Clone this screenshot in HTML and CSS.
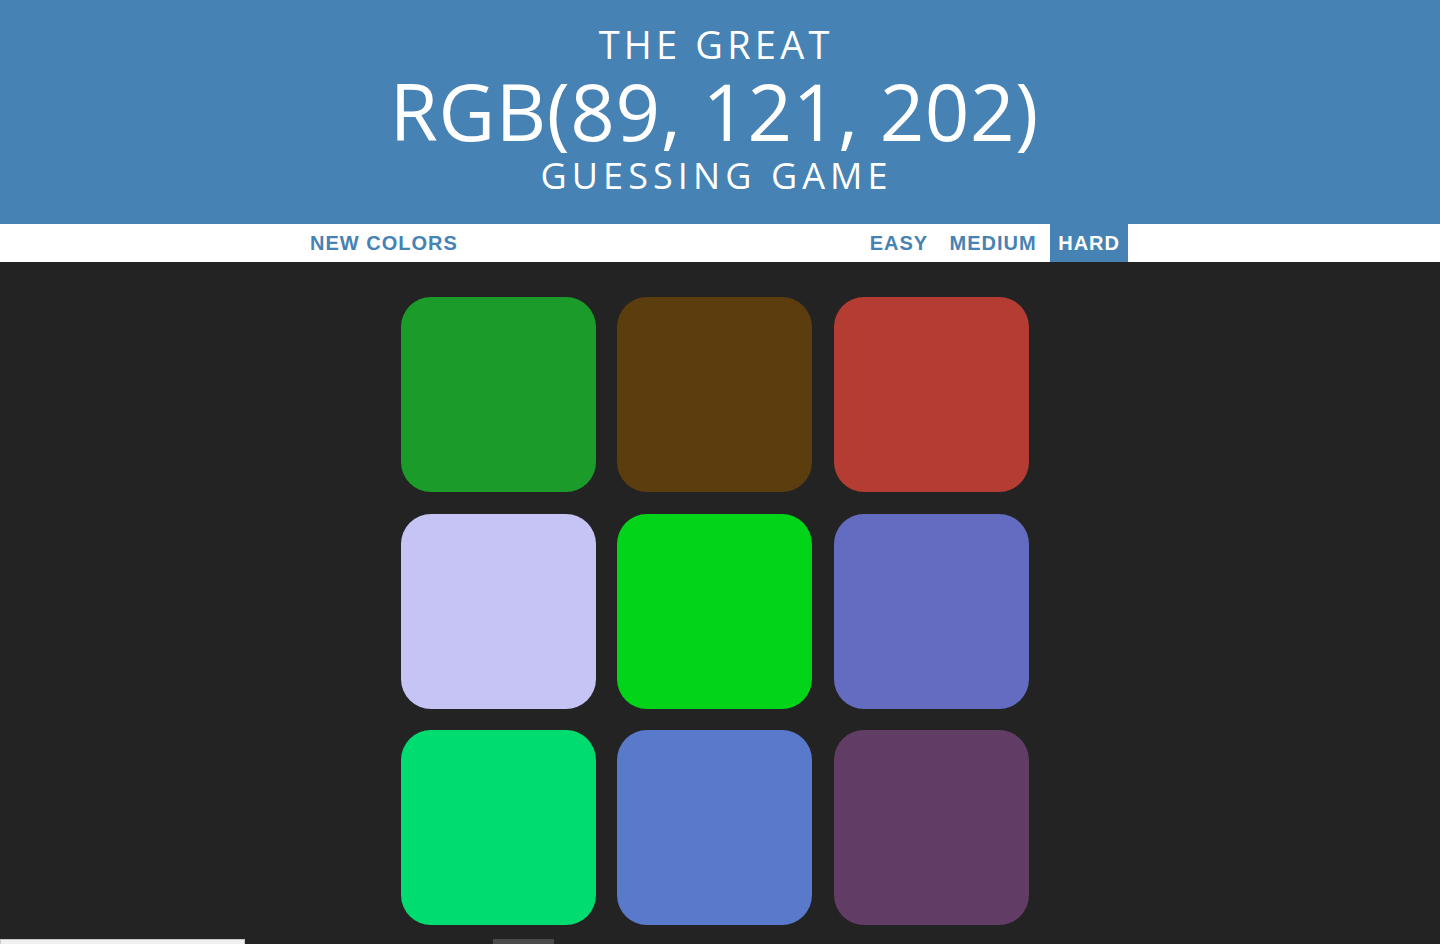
FILE: index.html
```html
<!DOCTYPE html>
<html>
<head>
<meta charset="utf-8">
<link rel="stylesheet" href="styles.css">
<title>Color Game</title>
</head>
<body>
<h1 class="title">
  <span class="title-small">The Great</span>
  <span class="title-rgb">RGB(89, 121, 202)</span>
  <span class="title-sub">Guessing Game</span>
</h1>
<div class="stripe">
  <div class="stripe-inner">
    <button class="btn">New Colors</button>
    <div class="modes">
      <button class="btn">Easy</button>
      <button class="btn">Medium</button>
      <button class="btn selected">Hard</button>
    </div>
  </div>
</div>
<div class="container">
  <div class="grid">
    <div class="square sq1"></div>
    <div class="square sq2"></div>
    <div class="square sq3"></div>
    <div class="square sq4"></div>
    <div class="square sq5"></div>
    <div class="square sq6"></div>
    <div class="square sq7"></div>
    <div class="square sq8"></div>
    <div class="square sq9"></div>
  </div>
</div>
<div class="footer">
  <div class="foot-input"></div>
  <div class="foot-btn"></div>
</div>
</body>
</html>
```
FILE: styles.css
```css
html, body {
  margin: 0;
  padding: 0;
}
body {
  background: #232323;
  font-family: "Liberation Sans", Arial, sans-serif;
  overflow: hidden;
}
.title {
  margin: 0;
  height: 224px;
  box-sizing: border-box;
  background: #4682b4;
  color: #fff;
  text-align: center;
  text-transform: uppercase;
  font-family: "Open Sans", sans-serif;
  font-weight: 400;
  padding: 19px 12px 0 0;
}
.title span {
  display: block;
}
.title-small {
  font-size: 38px;
  line-height: 50px;
  letter-spacing: 4.2px;
  padding-left: 4.2px;
}
.title-rgb {
  font-size: 78px;
  line-height: 84px;
  letter-spacing: 0.6px;
  padding-left: 0.6px;
}
.title-sub {
  font-size: 36px;
  line-height: 46px;
  letter-spacing: 5.1px;
  padding-left: 5.1px;
}
.stripe {
  background: #fff;
  height: 38px;
}
.stripe-inner {
  width: 836px;
  margin: 0 auto;
  height: 100%;
  display: flex;
  justify-content: space-between;
  box-sizing: border-box;
  padding-right: 10px;
}
.modes {
  display: flex;
  gap: 5.5px;
  height: 100%;
}
.btn {
  border: none;
  background: none;
  margin: 0;
  height: 100%;
  padding: 0 8px;
  font-family: "Liberation Sans", Arial, sans-serif;
  font-weight: 700;
  font-size: 20px;
  letter-spacing: 1px;
  text-transform: uppercase;
  color: #4682b4;
  line-height: 36px;
}
.btn.selected {
  background: #4682b4;
  color: #fff;
}
.container {
  width: 638px;
  margin: 35px auto 0;
}
.grid {
  display: grid;
  grid-template-columns: repeat(3, 195px);
  grid-auto-rows: 195px;
  column-gap: 21.3px;
  row-gap: 21.5px;
}
.square {
  border-radius: 30px;
}
.sq1 { background: #1a9b2a; }
.sq2 { background: #5c3d0e; }
.sq3 { background: #b53c32; }
.sq4 { background: #c6c3f5; }
.sq5 { background: #02d41a; }
.sq6 { background: #646cc1; }
.sq7 { background: #00dc6f; }
.sq8 { background: #597aca; }
.sq9 { background: #613c65; }
.footer {
  display: flex;
  margin-top: 14px;
  height: 20px;
}
.foot-input {
  width: 243px;
  background: #f0f0f0;
  border: 1px solid #c8c8c8;
}
.foot-btn {
  width: 61px;
  margin-left: 248px;
  background: #4a4a4a;
}
```
